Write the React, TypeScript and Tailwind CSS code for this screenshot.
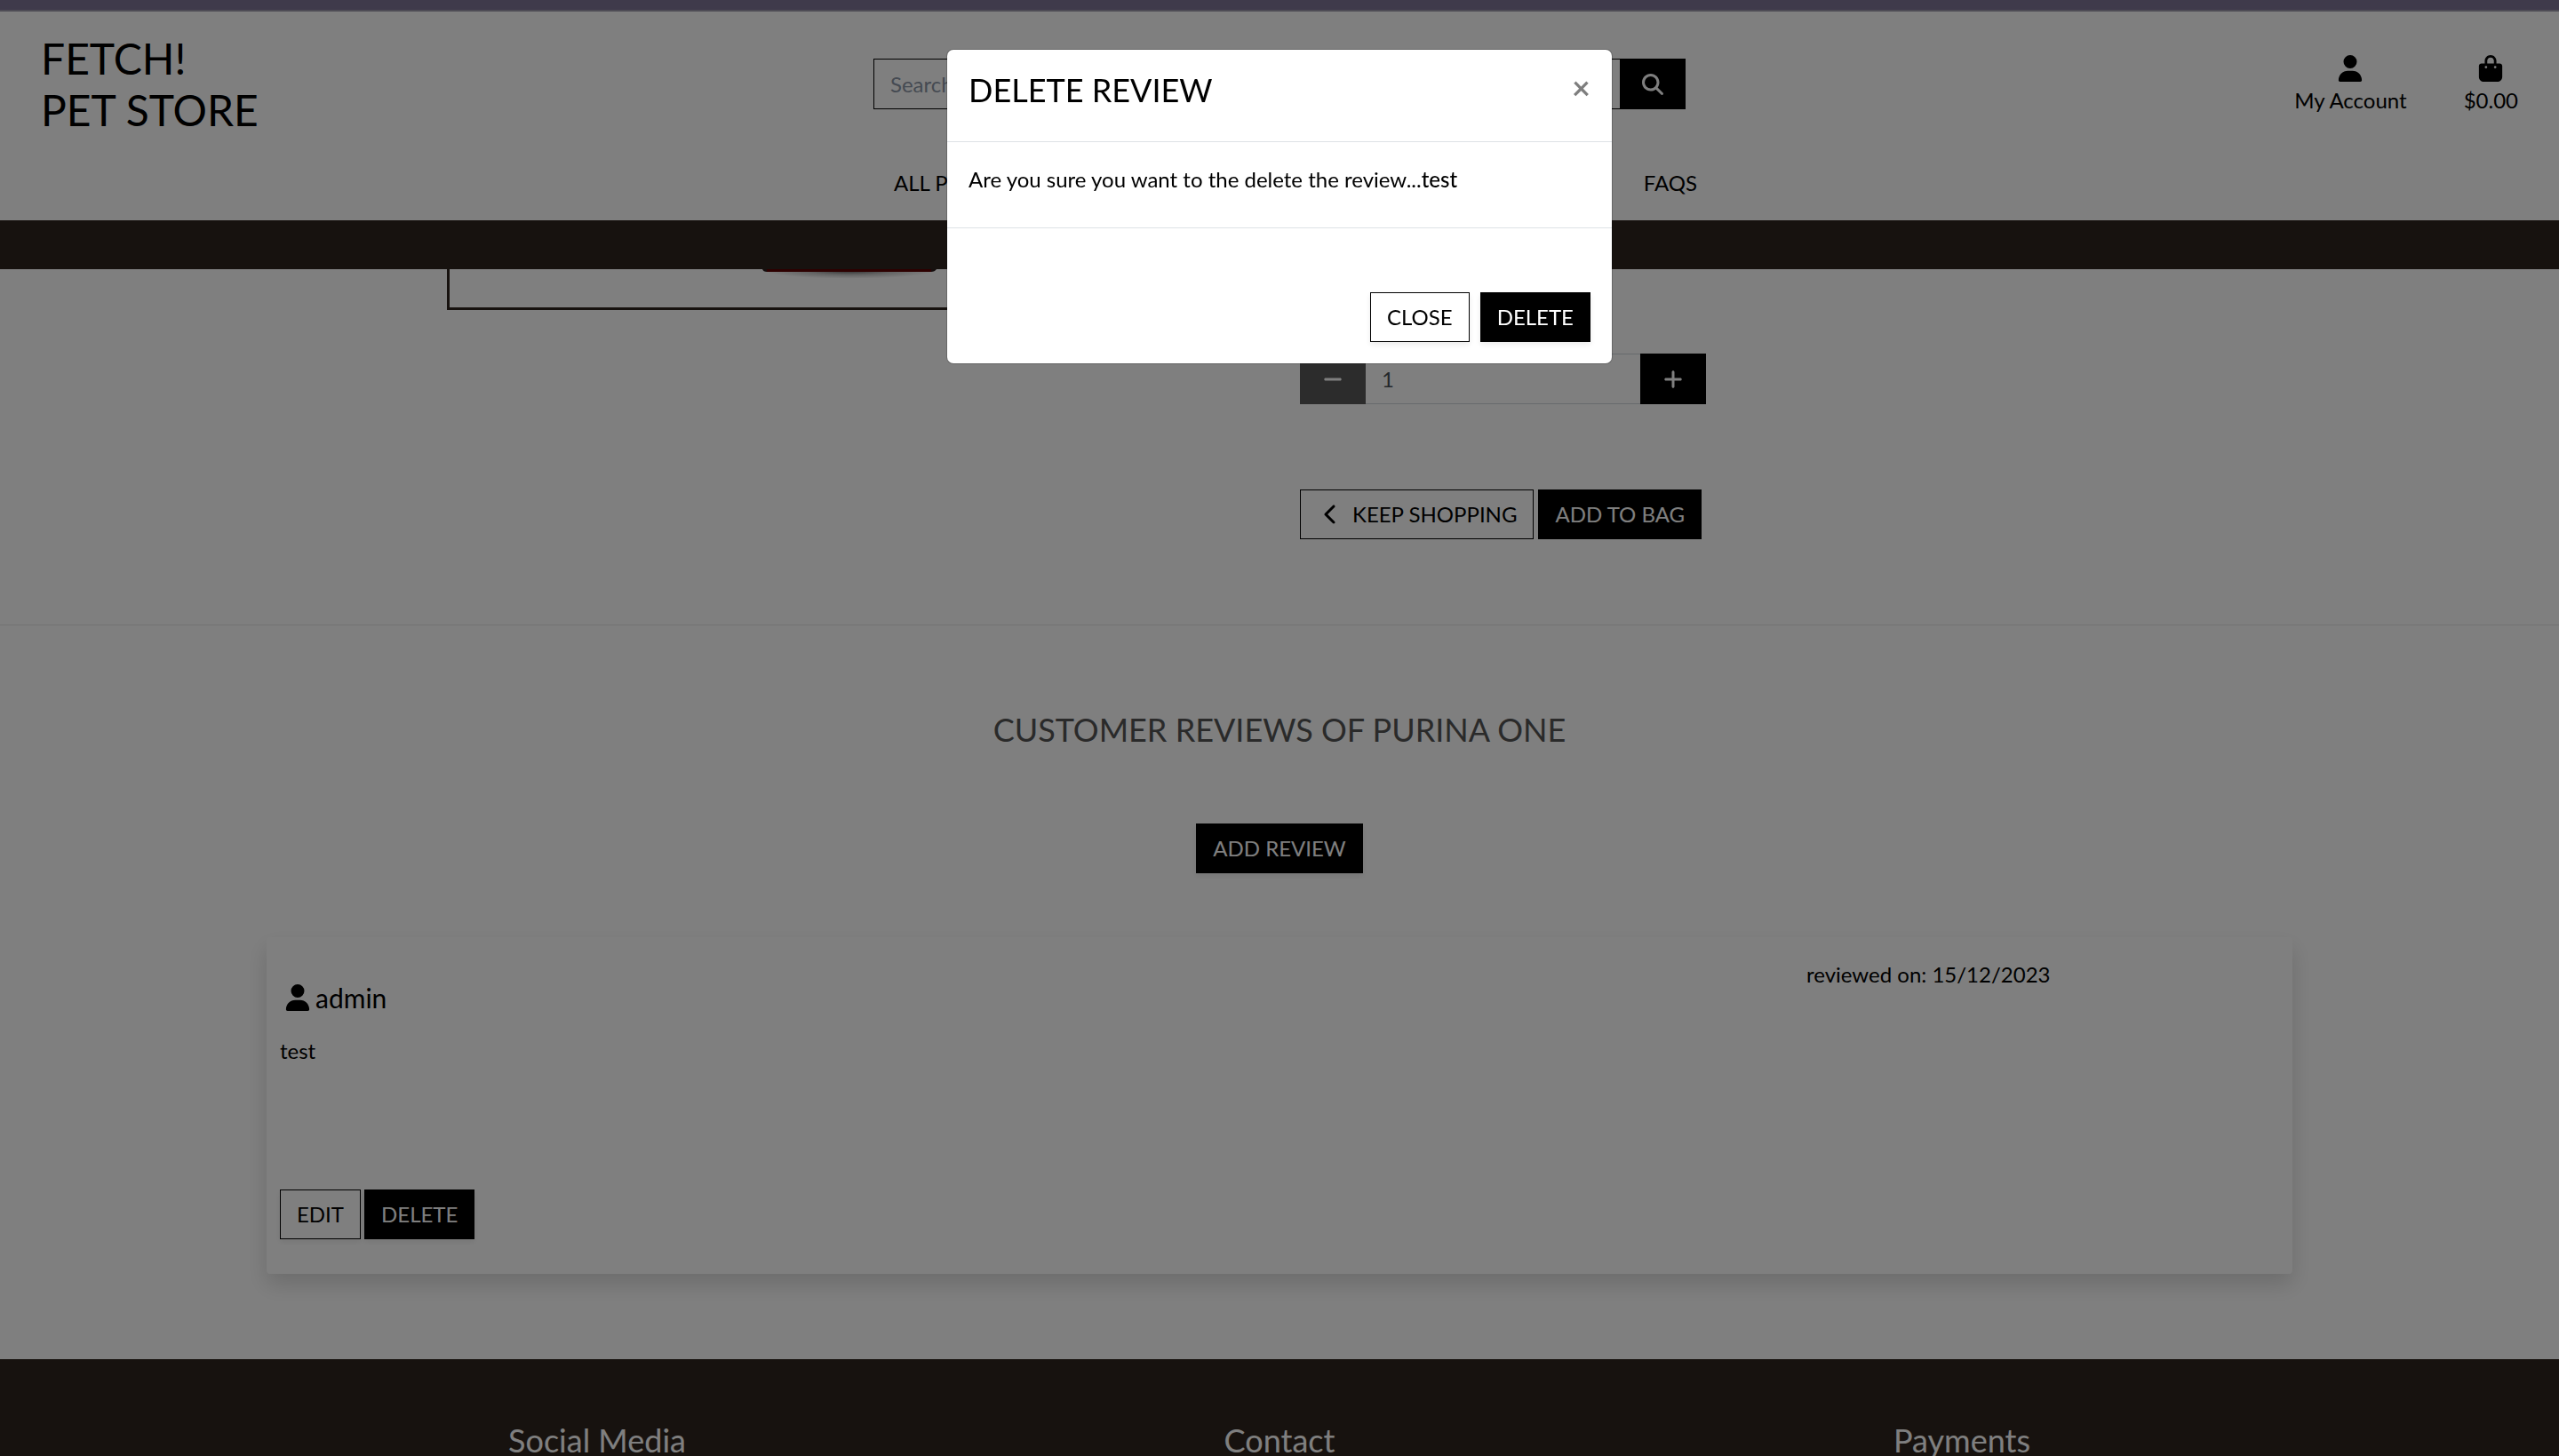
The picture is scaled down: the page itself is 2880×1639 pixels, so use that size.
import type { ButtonHTMLAttributes, ReactNode } from "react";
import {
  FaBagShopping,
  FaChevronLeft,
  FaMagnifyingGlass,
  FaMinus,
  FaPlus,
  FaUser,
} from "react-icons/fa6";

type ButtonProps = ButtonHTMLAttributes<HTMLButtonElement> & {
  variant: "solid" | "outline";
  raised?: boolean;
  children: ReactNode;
};

function Button({ variant, raised = false, children, ...rest }: ButtonProps) {
  const look =
    variant === "solid" ? "bg-black text-white" : "bg-white text-black";
  const shadow = raised ? "shadow-[0_3px_6px_rgba(0,0,0,0.08)]" : "";
  return (
    <button
      type="button"
      className={`flex items-center border border-black px-[18px] py-[9px] leading-9 whitespace-nowrap ${look} ${shadow}`}
      {...rest}
    >
      {children}
    </button>
  );
}

function Header() {
  return (
    <header>
      <div className="h-[13px] border-b-2 border-[#9c98ab] bg-[#7e7496]" />
      <div className="grid grid-cols-3 bg-white pt-6 pb-6">
        <a href="#home" className="pl-[46px] text-5xl leading-[58px]">
          FETCH!
          <br />
          PET STORE
        </a>
        <form className="mx-[23px] mt-[29px] flex h-[57px]">
          <input
            type="search"
            aria-label="Search"
            placeholder="Search"
            className="min-w-0 grow border border-r-0 border-black px-[18px] placeholder:text-[#8b95a5]"
          />
          <button
            type="button"
            aria-label="Submit search"
            className="flex w-[74px] shrink-0 items-center justify-center bg-black text-white"
          >
            <FaMagnifyingGlass />
          </button>
        </form>
        <div className="mt-[25px] flex justify-end gap-16 pr-[46px]">
          <a href="#account" className="flex flex-col items-center gap-[3px] leading-9">
            <FaUser className="text-[30px]" />
            My Account
          </a>
          <a href="#bag" className="flex flex-col items-center gap-[3px] leading-9">
            <FaBagShopping className="text-[30px]" />
            $0.00
          </a>
        </div>
        <nav className="col-start-2 mt-[35px] flex justify-between pr-[10px] pl-[46px] leading-9">
          <a href="#products">ALL PRODUCTS</a>
          <a href="#faqs">FAQS</a>
        </nav>
      </div>
      <div className="h-[55px] bg-[#2f251f]" />
    </header>
  );
}

function Product() {
  return (
    <section className="grid grid-cols-6 border-b border-black/10 pb-24">
      <div className="col-span-2 col-start-2 px-[23px]">
        <div className="flex h-[46px] justify-center border-x-3 border-b-3 border-[#2f251f] pr-2">
          <svg width="196" height="12" viewBox="0 0 196 12" aria-hidden="true">
            <defs>
              <radialGradient
                id="under"
                cx="98"
                cy="2"
                r="96"
                gradientUnits="userSpaceOnUse"
                gradientTransform="translate(0 2) scale(1 0.09) translate(0 -2)"
              >
                <stop offset="0" stopColor="#000" stopOpacity="0.6" />
                <stop offset="0.5" stopColor="#000" stopOpacity="0.22" />
                <stop offset="1" stopColor="#000" stopOpacity="0" />
              </radialGradient>
            </defs>
            <path d="M0 2H196V12H0Z" fill="url(#under)" />
            <path d="M0 0H196Q194 3 190 3H5Q1 3 0 0Z" fill="#2a1c1c" />
            <path d="M5 0H190V3H5Z" fill="#5a0000" />
          </svg>
        </div>
      </div>
      <div className="pt-[95px] pl-[23px]">
        <div className="flex h-[57px]">
          <button
            type="button"
            aria-label="Decrease quantity"
            className="flex w-[74px] shrink-0 items-center justify-center bg-[#595959] text-white"
          >
            <FaMinus />
          </button>
          <input
            type="text"
            aria-label="Quantity"
            defaultValue="1"
            className="min-w-0 grow border-y border-[#ced4da] px-[18px] text-[#495057]"
          />
          <button
            type="button"
            aria-label="Increase quantity"
            className="flex w-[74px] shrink-0 items-center justify-center bg-black text-white"
          >
            <FaPlus />
          </button>
        </div>
        <div className="mt-24 flex gap-[5px]">
          <Button variant="outline">
            <FaChevronLeft className="mr-3 ml-1" />
            KEEP SHOPPING
          </Button>
          <Button variant="solid">ADD TO BAG</Button>
        </div>
      </div>
    </section>
  );
}

function Reviews() {
  return (
    <section className="flex flex-col items-center py-24">
      <h2 className="text-4xl leading-[43px] text-[#555555]">
        CUSTOMER REVIEWS OF PURINA ONE
      </h2>
      <div className="mt-[84px]">
        <Button variant="solid" raised>
          ADD REVIEW
        </Button>
      </div>
      <article className="mt-[72px] grid w-full max-w-[2280px] grid-cols-4 rounded bg-white pb-[39px] shadow-[0_12px_24px_rgba(0,0,0,0.15)]">
        <div className="col-span-3 pt-[50px] pl-[15px]">
          <h3 className="flex items-center text-3xl leading-9">
            <FaUser className="mx-[5px]" />
            admin
          </h3>
          <p className="mt-6 leading-9">test</p>
          <div className="mt-[138px] flex gap-1">
            <Button variant="outline" raised>
              EDIT
            </Button>
            <Button variant="solid" raised>
              DELETE
            </Button>
          </div>
        </div>
        <p className="px-[23px] pt-6 leading-9">reviewed on: 15/12/2023</p>
      </article>
    </section>
  );
}

function Footer() {
  return (
    <footer className="grow bg-[#2f251f] pt-[70px] text-white">
      <div className="mx-auto grid w-4/5 grid-cols-3 text-center text-4xl leading-[43px]">
        <h2>Social Media</h2>
        <h2>Contact</h2>
        <h2>Payments</h2>
      </div>
    </footer>
  );
}

function DeleteModal() {
  return (
    <div className="fixed inset-0 bg-black/50 pt-14">
      <div
        role="dialog"
        aria-modal="true"
        aria-labelledby="delete-title"
        className="mx-auto w-full max-w-[748px] rounded-[7px] bg-white shadow-[0_0_0_1px_rgba(0,0,0,0.2)]"
      >
        <div className="flex items-start justify-between border-b border-[#dee2e6] px-6 pt-6 pb-9">
          <h2 id="delete-title" className="text-4xl leading-[43px]">
            DELETE REVIEW
          </h2>
          <button
            type="button"
            aria-label="Close dialog"
            className="text-4xl leading-9 font-bold opacity-50"
          >
            ×
          </button>
        </div>
        <p className="border-b border-[#dee2e6] px-6 pt-6 pb-9 leading-9">
          Are you sure you want to the delete the review...
          <strong className="font-medium">test</strong>
        </p>
        <div className="flex justify-end gap-3 px-6 pt-18 pb-6">
          <Button variant="outline" raised>
            CLOSE
          </Button>
          <Button variant="solid" raised>
            DELETE
          </Button>
        </div>
      </div>
    </div>
  );
}

export default function App() {
  return (
    <div className="flex h-screen flex-col overflow-hidden bg-white font-[Lato,sans-serif] text-2xl text-black">
      <Header />
      <main>
        <Product />
        <Reviews />
      </main>
      <Footer />
      <DeleteModal />
    </div>
  );
}
